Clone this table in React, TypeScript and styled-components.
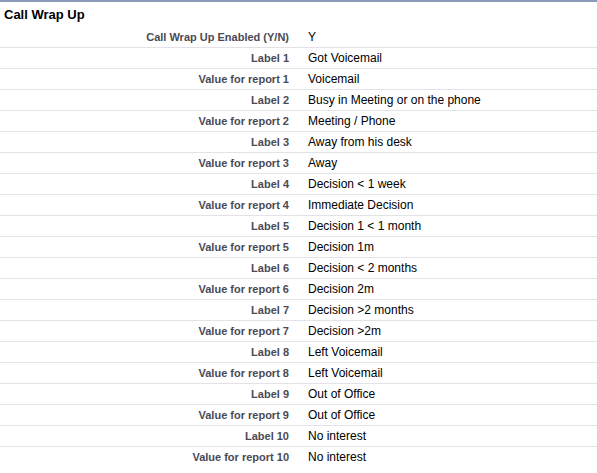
import React from "react";
import styled, { createGlobalStyle } from "styled-components";

const Global = createGlobalStyle`
  html, body { margin: 0; padding: 0; background: #fff; }
  body { font-family: Arial, "Liberation Sans", Helvetica, sans-serif; }
`;

const Section = styled.section`
  border-top: 2px solid #8a9abb;
  width: 597px;
`;

const Title = styled.h3`
  margin: 0;
  height: 25px;
  line-height: 26px;
  padding-left: 4px;
  font-size: 13px;
  font-weight: bold;
  color: #000;
`;

const Table = styled.div`
  display: grid;
  grid-template-columns: 300px 1fr;
`;

const Row = styled.div<{ $last?: boolean }>`
  display: contents;
  & > div {
    height: 20px;
    border-bottom: ${(p) => (p.$last ? "none" : "1px solid #e3e3e7")};
  }
`;

const Label = styled.div`
  text-align: right;
  padding-right: 11px;
  font-size: 11px;
  font-weight: bold;
  color: #4a4a56;
  line-height: 20px;
`;

const Value = styled.div`
  padding-left: 8px;
  font-size: 12px;
  color: #000;
  line-height: 20px;
`;

const rows: [string, string][] = [
  ["Call Wrap Up Enabled (Y/N)", "Y"],
  ["Label 1", "Got Voicemail"],
  ["Value for report 1", "Voicemail"],
  ["Label 2", "Busy in Meeting or on the phone"],
  ["Value for report 2", "Meeting / Phone"],
  ["Label 3", "Away from his desk"],
  ["Value for report 3", "Away"],
  ["Label 4", "Decision < 1 week"],
  ["Value for report 4", "Immediate Decision"],
  ["Label 5", "Decision 1 < 1 month"],
  ["Value for report 5", "Decision 1m"],
  ["Label 6", "Decision < 2 months"],
  ["Value for report 6", "Decision 2m"],
  ["Label 7", "Decision >2 months"],
  ["Value for report 7", "Decision >2m"],
  ["Label 8", "Left Voicemail"],
  ["Value for report 8", "Left Voicemail"],
  ["Label 9", "Out of Office"],
  ["Value for report 9", "Out of Office"],
  ["Label 10", "No interest"],
  ["Value for report 10", "No interest"],
];

export default function App() {
  return (
    <>
      <Global />
      <Section>
        <Title>Call Wrap Up</Title>
        <Table>
          {rows.map(([l, v], i) => (
            <Row key={i} $last={i === rows.length - 1}>
              <Label>{l}</Label>
              <Value>{v}</Value>
            </Row>
          ))}
        </Table>
      </Section>
    </>
  );
}
